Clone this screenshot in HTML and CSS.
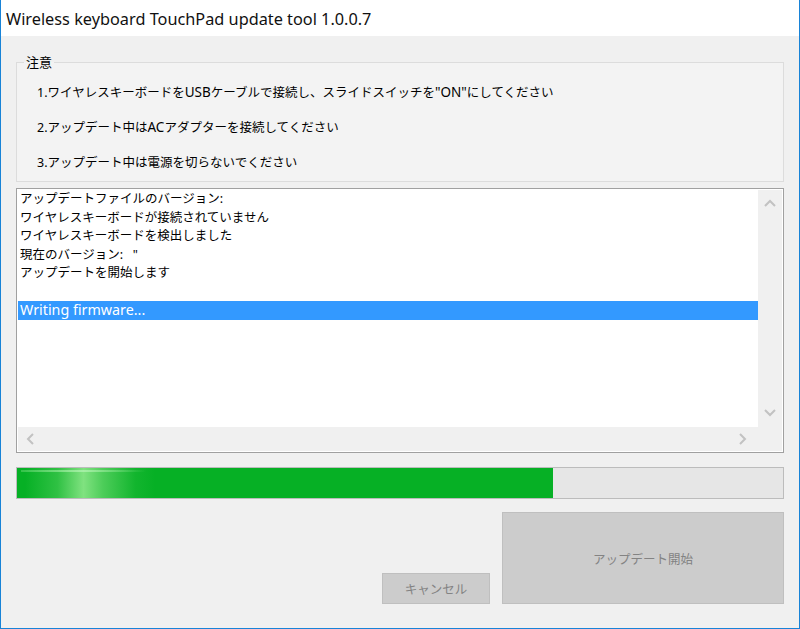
FILE: index.html
```html
<!DOCTYPE html>
<html lang="ja">
<head>
<meta charset="utf-8">
<title>Wireless keyboard TouchPad update tool 1.0.0.7</title>
<link rel="stylesheet" href="styles.css">
</head>
<body>
<div class="window">
  <div class="titlebar">Wireless keyboard TouchPad update tool 1.0.0.7</div>
  <div class="main">
    <fieldset class="group">
      <legend class="legend">注意</legend>
      <div class="notes">
        <div class="note">1.ワイヤレスキーボードを<span class="lat">USB</span>ケーブルで接続し、スライドスイッチを<span class="lat">"ON"</span>にしてください</div>
        <div class="note">2.アップデート中は<span class="lat">AC</span>アダプターを接続してください</div>
        <div class="note">3.アップデート中は電源を切らないでください</div>
      </div>
    </fieldset>

    <div class="logbox">
      <div class="log">
        <div class="line">アップデートファイルのバージョン:</div>
        <div class="line">ワイヤレスキーボードが接続されていません</div>
        <div class="line">ワイヤレスキーボードを検出しました</div>
        <div class="line">現在のバージョン:&nbsp;&nbsp;&nbsp;"</div>
        <div class="line">アップデートを開始します</div>
        <div class="line">&nbsp;</div>
        <div class="line selected">Writing firmware...</div>
      </div>
      <div class="vscroll">
        <svg class="arrow" width="12" height="8" viewBox="0 0 12 8"><path d="M1 7 L6 2 L11 7" fill="none" stroke="#c2c2c2" stroke-width="2"/></svg>
        <svg class="arrow" width="12" height="8" viewBox="0 0 12 8"><path d="M1 1 L6 6 L11 1" fill="none" stroke="#c2c2c2" stroke-width="2"/></svg>
      </div>
      <div class="hscroll">
        <svg class="arrow" width="8" height="12" viewBox="0 0 8 12"><path d="M7 1 L2 6 L7 11" fill="none" stroke="#c2c2c2" stroke-width="2"/></svg>
        <svg class="arrow" width="8" height="12" viewBox="0 0 8 12"><path d="M1 1 L6 6 L1 11" fill="none" stroke="#c2c2c2" stroke-width="2"/></svg>
      </div>
      <div class="corner"></div>
    </div>

    <div class="progress">
      <div class="fill" style="width:70%">
        <div class="glow"></div>
        <div class="shine"></div>
      </div>
    </div>

    <div class="buttons">
      <div class="btn cancel">キャンセル</div>
      <div class="btn start">アップデート開始</div>
    </div>
  </div>
</div>
</body>
</html>
```
FILE: styles.css
```css
html, body {
  margin: 0;
  padding: 0;
  background: #f0f0f0;
}
body {
  font-family: "Noto Sans", "Noto Sans CJK JP", sans-serif;
  color: #000;
}
.window {
  width: 800px;
  height: 629px;
  box-sizing: border-box;
  border-left: 1px solid #1883d7;
  border-right: 1px solid #1883d7;
  border-bottom: 1px solid #1883d7;
  background: #f0f0f0;
  display: flex;
  flex-direction: column;
}
.titlebar {
  height: 36px;
  background: #fff;
  font-size: 16.3px;
  line-height: 38px;
  padding-left: 5px;
  box-sizing: border-box;
  white-space: nowrap;
  color: #111;
}
.main {
  padding: 18px 15px 0 15px;
  display: flex;
  flex-direction: column;
  font-size: 12.5px;
}
.group {
  margin: 0;
  padding: 0 0 1px 7px;
  border: 1px solid #dcdcdc;
  background: #f3f3f3;
  min-width: 0;
}
.legend {
  padding: 0 2px;
  font-size: 13px;
  line-height: 16px;
}
.notes {
  padding-left: 13px;
  padding-top: 5px;
}
.note {
  line-height: 35px;
  height: 35px;
  white-space: nowrap;
}
.lat {
  font-size: 13.5px;
}
.logbox {
  margin-top: 6px;
  height: 265px;
  box-sizing: border-box;
  border: 1px solid #a0a0a0;
  padding: 1px;
  background: #fff;
  display: grid;
  grid-template-columns: 1fr 24px;
  grid-template-rows: 1fr 24px;
}
.log {
  background: #fff;
  padding: 0;
  overflow: hidden;
  font-size: 12.5px;
}
.line {
  line-height: 18.5px;
  height: 18.5px;
  padding-left: 2px;
  white-space: nowrap;
}
.line.selected {
  background: #3399ff;
  color: #fff;
  font-size: 14.3px;
}
.vscroll {
  background: #f0f0f0;
  display: flex;
  flex-direction: column;
  justify-content: space-between;
  align-items: center;
  padding: 9px 0 10px 0;
}
.hscroll {
  background: #f0f0f0;
  display: flex;
  justify-content: space-between;
  align-items: center;
  padding: 0 11px 0 8px;
}
.corner {
  background: #f0f0f0;
}
.arrow {
  display: block;
}
.progress {
  margin-top: 14px;
  height: 32px;
  box-sizing: border-box;
  border: 1px solid #bcbcbc;
  background: #e6e6e6;
  display: flex;
}
.fill {
  position: relative;
  height: 100%;
  background: #06b025;
  overflow: hidden;
}
.glow {
  position: absolute;
  left: 8px;
  top: 0;
  width: 130px;
  height: 100%;
  background: linear-gradient(90deg, rgba(124,224,124,0) 0%, rgba(124,224,124,0.35) 25%, rgba(128,226,128,1) 45%, rgba(124,224,124,0.6) 60%, rgba(124,224,124,0.1) 85%, rgba(124,224,124,0) 100%);
}
.shine {
  position: absolute;
  left: 4px;
  top: 2px;
  width: 125px;
  height: 2px;
  background: linear-gradient(90deg, rgba(160,240,160,0.3), rgba(180,245,180,0.7) 50%, rgba(160,240,160,0));
}
.buttons {
  margin-top: 13px;
  display: flex;
  justify-content: flex-end;
  align-items: flex-end;
  gap: 12px;
}
.btn {
  box-sizing: border-box;
  background: #cccccc;
  border: 1px solid #bfbfbf;
  color: #838383;
  font-size: 12.5px;
  display: flex;
  align-items: center;
  justify-content: center;
}
.cancel {
  width: 108px;
  height: 31px;
}
.start {
  width: 282px;
  height: 92px;
}
```
